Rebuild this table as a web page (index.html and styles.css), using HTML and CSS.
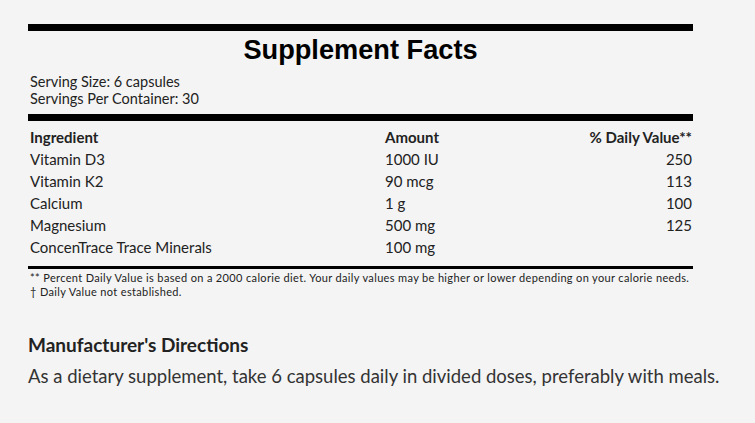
FILE: index.html
```html
<!DOCTYPE html>
<html lang="en">
<head>
<meta charset="utf-8">
<title>Supplement Facts</title>
<link rel="stylesheet" href="styles.css">
</head>
<body>
<main class="page">
  <section class="facts">
    <h1 class="facts-title">Supplement Facts</h1>
    <div class="serving">
      <div>Serving Size: 6 capsules</div>
      <div>Servings Per Container: 30</div>
    </div>
    <div class="table">
      <div class="row head">
        <span>Ingredient</span><span>Amount</span><span class="dv">% Daily Value**</span>
      </div>
      <div class="row"><span>Vitamin D3</span><span>1000 IU</span><span class="dv">250</span></div>
      <div class="row"><span>Vitamin K2</span><span>90 mcg</span><span class="dv">113</span></div>
      <div class="row"><span>Calcium</span><span>1 g</span><span class="dv">100</span></div>
      <div class="row"><span>Magnesium</span><span>500 mg</span><span class="dv">125</span></div>
      <div class="row"><span>ConcenTrace Trace Minerals</span><span>100 mg</span><span class="dv"></span></div>
    </div>
    <div class="notes">
      <div>** Percent Daily Value is based on a 2000 calorie diet. Your daily values may be higher or lower depending on your calorie needs.</div>
      <div>† Daily Value not established.</div>
    </div>
  </section>
  <section class="directions">
    <h2 class="directions-title">Manufacturer's Directions</h2>
    <p class="directions-text">As a dietary supplement, take 6 capsules daily in divided doses, preferably with meals.</p>
  </section>
</main>
</body>
</html>
```

FILE: styles.css
```css
html, body {
  margin: 0;
  padding: 0;
  background: #f4f4f4;
}
body {
  font-family: Lato, "Noto Sans", sans-serif;
  color: #222;
}
.page {
  padding: 24px 0 0 28px;
}
.facts {
  width: 665px;
  border-top: 7px solid #000;
}
.facts-title {
  margin: 3px 0 0;
  font-family: "Liberation Sans", Arial, sans-serif;
  font-weight: bold;
  font-size: 27.2px;
  line-height: 32px;
  text-align: center;
  color: #000;
}
.serving {
  margin-top: 7px;
  padding-left: 2px;
  font-size: 14.5px;
  line-height: 17px;
  padding-bottom: 7px;
  border-bottom: 7px solid #000;
}
.table {
  padding-top: 5px;
  padding-bottom: 8px;
  border-bottom: 3px solid #000;
}
.row {
  display: grid;
  grid-template-columns: 355px 1fr 1fr;
  padding: 0 1px 0 2px;
  font-size: 15px;
  line-height: 22px;
}
.row.head {
  font-weight: bold;
}
.dv {
  text-align: right;
}
.notes {
  padding: 2px 0 0 2px;
  font-size: 11px;
  letter-spacing: 0.35px;
  line-height: 13.5px;
  white-space: nowrap;
}
.directions {
  margin-top: 36px;
}
.directions-title {
  margin: 0;
  font-size: 19px;
  line-height: 22px;
  font-weight: bold;
}
.directions-text {
  margin: 7px 0 0;
  font-size: 18.5px;
  line-height: 27px;
  color: #333;
}
```
